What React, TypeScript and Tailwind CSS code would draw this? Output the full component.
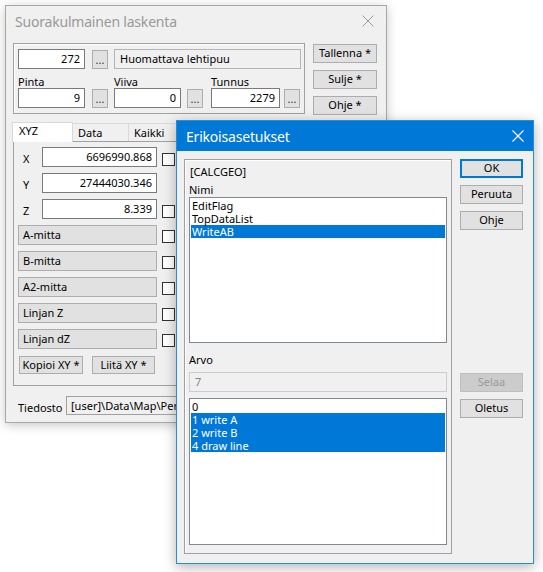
import React from "react";

const F = { fontFamily: '"Noto Sans", "Open Sans", sans-serif' };

function Dots({ cls }: { cls: string }) {
  return (
    <div className={"border border-[#adadad] bg-[#e1e1e1] flex items-end justify-center text-[11px] leading-[14px] text-[#333] " + cls}>
      <span className="-translate-y-[1px]">...</span>
    </div>
  );
}

function Check({ cls }: { cls?: string }) {
  return <div className={"w-[13px] h-[13px] border border-[#333] bg-white " + (cls || "")} />;
}

function Btn({ label, cls }: { label: string; cls: string }) {
  return (
    <div className={"border border-[#adadad] bg-[#e1e1e1] flex items-center justify-center text-black " + cls}>
      {label}
    </div>
  );
}

function FieldBtn({ label }: { label: string }) {
  return (
    <div className="flex items-start h-[20px] mb-[6px]">
      <div className="w-[139px] h-[20px] border border-[#adadad] bg-[#e1e1e1] pl-[4px] leading-[18px]">{label}</div>
      <Check cls="ml-[5px] mt-[5px]" />
    </div>
  );
}

function CoordRow({ label, value, check }: { label: string; value: string; check: boolean }) {
  return (
    <div className="flex items-start h-[20px] mb-[6px]">
      <div className="w-[24px] pl-[5px] pt-[5px] leading-[14px]">{label}</div>
      <div className="w-[115px] h-[20px] border border-[#7a7a7a] bg-white text-right pr-[4px] leading-[18px]">{value}</div>
      {check ? <Check cls="ml-[5px] mt-[6px]" /> : null}
    </div>
  );
}

export default function App() {
  return (
    <div className="relative w-[543px] h-[572px] bg-white overflow-hidden text-[11px] text-black" style={F}>
      {/* Main window */}
      <div className="absolute left-[5px] top-[5px] w-[382px] h-[418px] border border-[#a8a8a8] bg-[#f0f0f0] shadow-[0_2px_10px_rgba(0,0,0,0.22)] flex flex-col">
        <div className="h-[30px] flex items-center justify-between pl-[9px] pr-[10px] shrink-0">
          <span className="text-[14px] text-[#999999] tracking-[-0.2px]">Suorakulmainen laskenta</span>
          <svg width="12" height="12" viewBox="0 0 12 12" className="mr-[2px]">
            <path d="M0.5 0.5 L11.5 11.5 M11.5 0.5 L0.5 11.5" stroke="#9a9a9a" strokeWidth="1" />
          </svg>
        </div>
        <div className="flex items-start h-[72px] mt-[7px] pl-[7px] shrink-0">
          {/* group box */}
          <div className="w-[292px] h-[71px] border border-[#a0a0a0] shadow-[inset_1px_1px_0_#ffffff] pl-[4px] pt-[5px]">
            <div className="flex items-start h-[20px]">
              <div className="w-[67px] h-[20px] border border-[#7a7a7a] bg-white text-right pr-[4px] leading-[18px]">272</div>
              <Dots cls="ml-[7px] mt-[1px] w-[16px] h-[19px]" />
              <div className="ml-[6px] w-[187px] h-[20px] border border-[#b5b5b5] bg-[#f0f0f0] pl-[5px] leading-[18px]">Huomattava lehtipuu</div>
            </div>
            <div className="flex items-start mt-[6px]">
              <div className="flex flex-col w-[96px]">
                <div className="leading-[13px] h-[13px]">Pinta</div>
                <div className="flex items-start">
                  <div className="w-[67px] h-[20px] border border-[#7a7a7a] bg-white text-right pr-[4px] leading-[18px]">9</div>
                  <Dots cls="ml-[7px] mt-[1px] w-[16px] h-[19px]" />
                </div>
              </div>
              <div className="flex flex-col w-[97px]">
                <div className="leading-[13px] h-[13px]">Viiva</div>
                <div className="flex items-start">
                  <div className="w-[67px] h-[20px] border border-[#7a7a7a] bg-white text-right pr-[4px] leading-[18px]">0</div>
                  <Dots cls="ml-[6px] mt-[1px] w-[16px] h-[19px]" />
                </div>
              </div>
              <div className="flex flex-col">
                <div className="leading-[13px] h-[13px]">Tunnus</div>
                <div className="flex items-start">
                  <div className="w-[69px] h-[20px] border border-[#7a7a7a] bg-white text-right pr-[4px] leading-[18px]">2279</div>
                  <Dots cls="ml-[4px] mt-[1px] w-[16px] h-[19px]" />
                </div>
              </div>
            </div>
          </div>
          <div className="ml-[8px] mt-[1px] flex flex-col w-[64px]">
            <Btn label="Tallenna *" cls="h-[19px]" />
            <Btn label="Sulje *" cls="h-[19px] mt-[7px]" />
            <Btn label="Ohje *" cls="h-[19px] mt-[7px]" />
          </div>
        </div>
        {/* tabs */}
        <div className="flex items-end h-[20px] mt-[6px] pl-[6px] shrink-0">
          <div className="w-[61px] h-[20px] bg-white border border-b-0 border-[#d9d9d9] pl-[6px] leading-[16px] relative z-10 -mb-[1px]">XYZ</div>
          <div className="w-[56px] h-[18px] border border-b-0 border-l-0 border-[#d9d9d9] pl-[5px] leading-[18px]">Data</div>
          <div className="w-[56px] h-[18px] border border-b-0 border-l-0 border-[#d9d9d9] pl-[5px] leading-[18px]">Kaikki</div>
        </div>
        <div className="ml-[7px] w-[364px] h-[245px] border border-[#a0a0a0] pl-[4px] pt-[5px] shrink-0">
          <CoordRow label="X" value="6696990.868" check={true} />
          <CoordRow label="Y" value="27444030.346" check={false} />
          <CoordRow label="Z" value="8.339" check={true} />
          <FieldBtn label="A-mitta" />
          <FieldBtn label="B-mitta" />
          <FieldBtn label="A2-mitta" />
          <FieldBtn label="Linjan Z" />
          <FieldBtn label="Linjan dZ" />
          <div className="flex items-start mt-[7px]">
            <Btn label="Kopioi XY *" cls="ml-[1px] w-[64px] h-[18px]" />
            <Btn label="Liitä XY *" cls="ml-[9px] w-[63px] h-[18px]" />
          </div>
        </div>
        <div className="flex items-start mt-[10px] pl-[12px] shrink-0">
          <div className="w-[48px] pt-[5px] leading-[14px]">Tiedosto</div>
          <div className="w-[300px] h-[19px] border border-[#a0a0a0] bg-[#f0f0f0] pl-[4px] leading-[17px] whitespace-nowrap overflow-hidden">[user]\Data\Map\Permanent\calcgeo.ini</div>
        </div>
      </div>

      {/* Dialog */}
      <div className="absolute left-[176px] top-[120px] w-[358px] h-[444px] border border-[#2a8bd6] bg-[#f0f0f0] shadow-[0_3px_12px_rgba(0,0,0,0.3)] flex flex-col">
        <div className="h-[30px] bg-[#0078d7] flex items-center justify-between pl-[9px] pr-[9px] shrink-0">
          <span className="text-[14px] text-white tracking-[-0.2px]">Erikoisasetukset</span>
          <svg width="12" height="12" viewBox="0 0 12 12">
            <path d="M0.5 0.5 L11.5 11.5 M11.5 0.5 L0.5 11.5" stroke="#ffffff" strokeWidth="1.1" />
          </svg>
        </div>
        <div className="flex items-start pl-[7px] pt-[8px]">
          <div className="w-[268px] h-[395px] border border-[#a0a0a0] shadow-[inset_1px_1px_0_#ffffff] pl-[4px] pt-[5px] flex flex-col">
            <div className="leading-[14px] h-[14px] pl-[1px]">[CALCGEO]</div>
            <div className="leading-[14px] h-[14px] mt-[4px]">Nimi</div>
            <div className="w-[258px] h-[146px] border border-[#828790] bg-white p-[1px] shrink-0">
              <div className="h-[13px] leading-[13px] pl-[1px]">EditFlag</div>
              <div className="h-[13px] leading-[13px] pl-[1px]">TopDataList</div>
              <div className="h-[13px] leading-[13px] pl-[1px] bg-[#0078d7] text-white">WriteAB</div>
            </div>
            <div className="leading-[14px] h-[14px] mt-[10px]">Arvo</div>
            <div className="mt-[5px] w-[258px] h-[20px] border border-[#cccccc] bg-[#f0f0f0] pl-[5px] leading-[18px] text-[#838383] shrink-0">7</div>
            <div className="mt-[6px] w-[258px] h-[147px] border border-[#828790] bg-white p-[1px] shrink-0">
              <div className="h-[13px] leading-[13px] pl-[1px]">0</div>
              <div className="h-[13px] leading-[13px] pl-[1px] bg-[#0078d7] text-white">1 write A</div>
              <div className="h-[13px] leading-[13px] pl-[1px] bg-[#0078d7] text-white">2 write B</div>
              <div className="h-[13px] leading-[13px] pl-[1px] bg-[#0078d7] text-white">4 draw line</div>
            </div>
          </div>
          <div className="ml-[8px] flex flex-col w-[63px]">
            <div className="h-[19px] border-2 border-[#0078d7] bg-[#e1e1e1] flex items-center justify-center">OK</div>
            <Btn label="Peruuta" cls="h-[19px] mt-[7px]" />
            <Btn label="Ohje" cls="h-[19px] mt-[7px]" />
            <div className="h-[19px] mt-[143px] border border-[#bfbfbf] bg-[#cccccc] flex items-center justify-center text-[#9a9a9a]">Selaa</div>
            <Btn label="Oletus" cls="h-[19px] mt-[7px]" />
          </div>
        </div>
      </div>
    </div>
  );
}
